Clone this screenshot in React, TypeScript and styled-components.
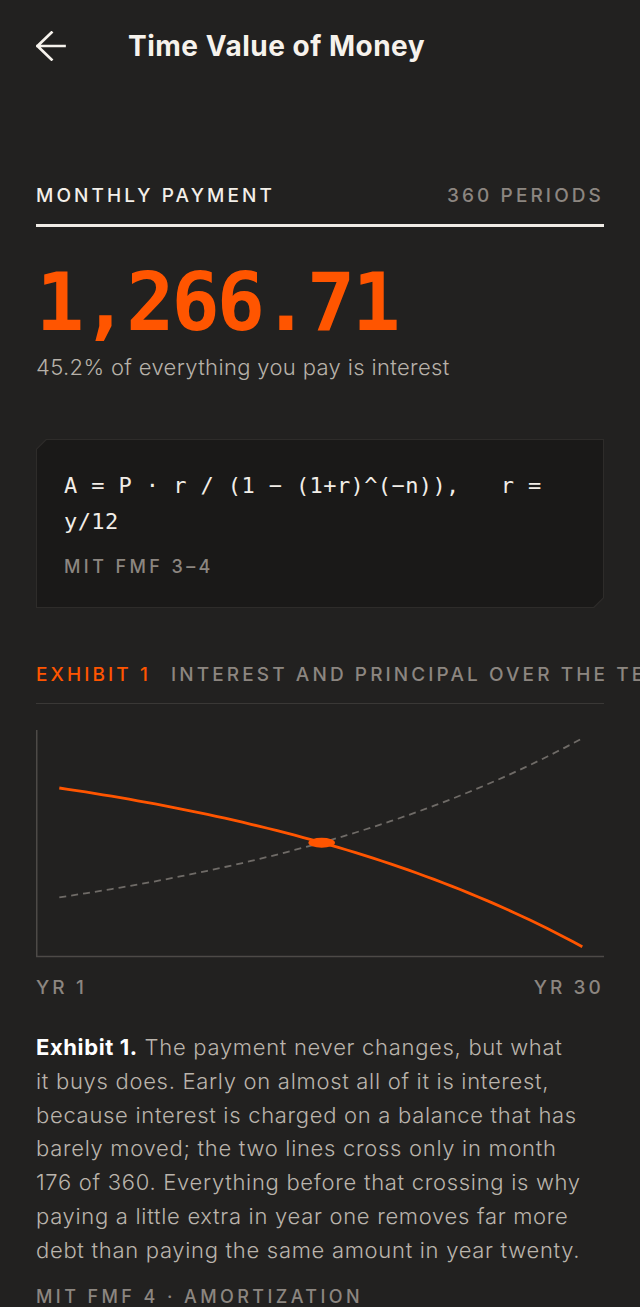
import React from "react";
import styled, { createGlobalStyle } from "styled-components";

const GlobalStyle = createGlobalStyle`
  html, body {
    margin: 0;
    padding: 0;
    background: #222120;
    overflow-x: hidden;
  }
  * { box-sizing: border-box; }
`;

const ORANGE = "#ff5500";
const MUTED = "#8c8680";

const Page = styled.main`
  width: 640px;
  min-height: 1307px;
  padding: 0 36px;
  background: #222120;
  color: #f3efe9;
  font-family: Inter, "Noto Sans", sans-serif;
  overflow: hidden;
`;

const Header = styled.header`
  height: 92px;
  display: flex;
  align-items: center;
`;

const BackButton = styled.button`
  width: 30px;
  height: 30px;
  padding: 0;
  margin: 0;
  border: 0;
  background: transparent;
  color: #f6f2ec;
  display: flex;
  align-items: center;
  justify-content: flex-start;
  cursor: pointer;
`;

const Title = styled.h1`
  margin: 0 0 0 62px;
  font-family: Inter, "Noto Sans", sans-serif;
  font-size: 28px;
  font-weight: 700;
  letter-spacing: 0.5px;
  color: #f6f2ec;
`;

const Label = styled.span<{ $tone?: "light" | "muted" | "accent" }>`
  font-family: Inter, "Noto Sans", sans-serif;
  font-size: 19px;
  line-height: 24px;
  font-weight: 500;
  letter-spacing: 3.1px;
  text-transform: uppercase;
  white-space: nowrap;
  color: ${(p) =>
    p.$tone === "muted" ? MUTED : p.$tone === "accent" ? ORANGE : "#f3efe9"};
`;

const MetaRow = styled.div`
  margin-top: 92px;
  padding-bottom: 16px;
  border-bottom: 3px solid #f0ece6;
  display: flex;
  justify-content: space-between;
  align-items: baseline;
`;

const Amount = styled.div`
  margin-top: 36px;
  font-family: "DejaVu Sans Mono", "Liberation Mono", monospace;
  font-weight: 700;
  font-size: 80px;
  line-height: 80px;
  letter-spacing: -3px;
  color: ${ORANGE};
`;

const Subtitle = styled.p`
  margin: 9px 0 0;
  font-size: 22px;
  line-height: 30px;
  font-weight: 300;
  letter-spacing: 0.35px;
  color: #b7b1a9;
`;

const cut = 10;

const Card = styled.section`
  margin-top: 57px;
  padding: 1px;
  background: #2e2c2a;
  clip-path: polygon(
    ${cut}px 0, 100% 0, 100% calc(100% - ${cut}px),
    calc(100% - ${cut}px) 100%, 0 100%, 0 ${cut}px
  );
`;

const CardInner = styled.div`
  background: #1a1918;
  padding: 28px 27px 28px 27px;
  clip-path: polygon(
    ${cut - 0.4}px 0, 100% 0, 100% calc(100% - ${cut - 0.4}px),
    calc(100% - ${cut - 0.4}px) 100%, 0 100%, 0 ${cut - 0.4}px
  );
`;

const Formula = styled.div`
  font-family: "DejaVu Sans Mono", "Liberation Mono", monospace;
  font-size: 22px;
  line-height: 36px;
  letter-spacing: 0.4px;
  white-space: pre-wrap;
  color: #f1ede7;
`;

const Source = styled.div<{ $gap: number }>`
  margin-top: ${(p) => p.$gap}px;
  font-family: Inter, "Noto Sans", sans-serif;
  font-size: 18px;
  line-height: 24px;
  font-weight: 500;
  letter-spacing: 3.4px;
  text-transform: uppercase;
  white-space: nowrap;
  color: ${MUTED};
`;

const ExhibitHead = styled.div`
  margin-top: 55px;
  padding-bottom: 16px;
  border-bottom: 1px solid #3a3836;
  display: flex;
  gap: 20px;
  width: 568px;
  overflow: visible;
`;

const ChartFrame = styled.figure`
  margin: 26px 0 0;
  height: 228px;
`;

const AxisLabels = styled.div`
  margin-top: 18px;
  display: flex;
  justify-content: space-between;
`;

const Caption = styled.p`
  margin: 31px 0 0;
  font-size: 22px;
  line-height: 33.8px;
  font-weight: 300;
  letter-spacing: 0.7px;
  color: #bab4ac;
`;

const Lead = styled.strong`
  font-weight: 700;
  letter-spacing: 0.6px;
  color: #ffffff;
`;

/* chart geometry (px inside a 568 x 228 drawing) */
const W = 568;
const H = 228;
const X0 = 23.3;
const X1 = 546.3;
const G = 3.68;

function curve(yStart: number, yEnd: number): string {
  const pts: string[] = [];
  const d = (yEnd - yStart) / (G - 1);
  const c = yStart - d;
  for (let i = 0; i <= 60; i++) {
    const f = i / 60;
    const x = X0 + (X1 - X0) * f;
    const y = c + d * Math.pow(G, f);
    pts.push(`${i === 0 ? "M" : "L"}${x.toFixed(2)} ${y.toFixed(2)}`);
  }
  return pts.join(" ");
}

const TOP = 731;
const interestPath = curve(789 - TOP, 947.7 - TOP);
const principalPath = curve(898.3 - TOP, 739.3 - TOP);

function Chart() {
  return (
    <svg width={W} height={H} viewBox={`0 0 ${W} ${H}`} style={{ display: "block" }}>
      <line x1={0.75} y1={0} x2={0.75} y2={226.5} stroke="#4d4a47" strokeWidth={1.5} />
      <line x1={0} y1={226.5} x2={W} y2={226.5} stroke="#4d4a47" strokeWidth={1.5} />
      <path
        d={principalPath}
        fill="none"
        stroke="#6f6b67"
        strokeWidth={1.8}
        strokeDasharray="7 5"
      />
      <path d={interestPath} fill="none" stroke={ORANGE} strokeWidth={2.8} />
      <ellipse cx={321.7 - 36} cy={843.7 - TOP} rx={13.3} ry={5} fill={ORANGE} />
    </svg>
  );
}

function BackArrow() {
  return (
    <svg width="30" height="30" viewBox="0 0 30 30" fill="none">
      <path
        d="M1.5 15H28.5M15.5 1.5L1.5 15L15.5 28.5"
        stroke="currentColor"
        strokeWidth="2.7"
        strokeLinecap="square"
      />
    </svg>
  );
}

const captionLines = [
  "it buys does. Early on almost all of it is interest,",
  "because interest is charged on a balance that has",
  "barely moved; the two lines cross only in month",
  "176 of 360. Everything before that crossing is why",
  "paying a little extra in year one removes far more",
  "debt than paying the same amount in year twenty.",
];

export default function App() {
  return (
    <>
      <GlobalStyle />
      <Page>
        <Header>
          <BackButton aria-label="Back">
            <BackArrow />
          </BackButton>
          <Title>Time Value of Money</Title>
        </Header>

        <MetaRow>
          <Label>Monthly payment</Label>
          <Label $tone="muted">360 periods</Label>
        </MetaRow>

        <Amount>1,266.71</Amount>
        <Subtitle>45.2% of everything you pay is interest</Subtitle>

        <Card>
          <CardInner>
            <Formula>{"A = P · r / (1 − (1+r)^(−n)),   r = y/12"}</Formula>
            <Source $gap={15}>MIT FMF 3–4</Source>
          </CardInner>
        </Card>

        <ExhibitHead>
          <Label $tone="accent">Exhibit 1</Label>
          <Label $tone="muted">Interest and principal over the term</Label>
        </ExhibitHead>

        <ChartFrame>
          <Chart />
        </ChartFrame>

        <AxisLabels>
          <Label $tone="muted">Yr 1</Label>
          <Label $tone="muted">Yr 30</Label>
        </AxisLabels>

        <Caption>
          <Lead>Exhibit 1.</Lead> The payment never changes, but what
          {captionLines.map((line) => (
            <React.Fragment key={line}>
              <br />
              {line}
            </React.Fragment>
          ))}
        </Caption>

        <Source $gap={17}>MIT FMF 4 · Amortization</Source>
      </Page>
    </>
  );
}
